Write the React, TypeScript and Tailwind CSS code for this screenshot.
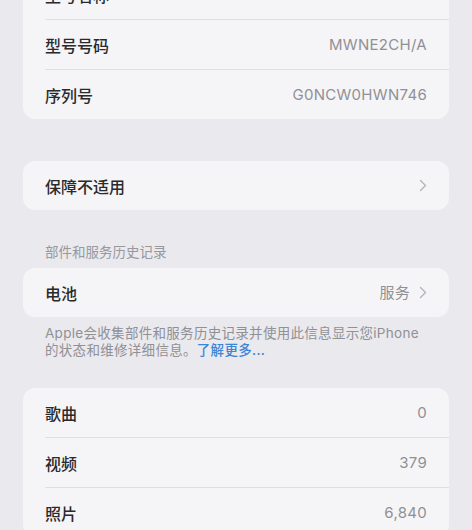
import React from 'react';

const CJK = "font-['Noto_Sans_CJK_SC',sans-serif]";
const LATIN = "font-['Inter','Noto_Sans_CJK_SC',sans-serif]";

function Chevron() {
  return (
    <svg width="8" height="13" viewBox="0 0 8 13" className="ml-[9px]" fill="none">
      <path d="M1.5 1.5 L6.5 6.5 L1.5 11.5" stroke="#b4b4b8" strokeWidth="1.4" strokeLinecap="round" strokeLinejoin="round" />
    </svg>
  );
}

type Row = { label: string; value?: string; chevron?: boolean };

function Card({ rows, className = '' }: { rows: Row[]; className?: string }) {
  return (
    <div className={`mx-[23px] rounded-[12px] bg-[#f5f5f7] ${className}`}>
      {rows.map((r, i) => (
        <div key={r.label}>
          {i > 0 && <div className="ml-[22px] h-px bg-[#dfdfe3]" />}
          <div className="flex h-[49px] items-center justify-between pl-[22px] pr-[22px]">
            <span className={`${CJK} text-[16px] leading-[20px] font-medium text-[#2a2a2d]`}>{r.label}</span>
            <span className="flex items-center">
              {r.value && (
                <span className={`${LATIN} text-[15px] leading-[20px] tracking-[0.3px] text-[#909095]`}>{r.value}</span>
              )}
              {r.chevron && <Chevron />}
            </span>
          </div>
        </div>
      ))}
    </div>
  );
}

export default function App() {
  return (
    <div className="h-[530px] w-[472px] overflow-hidden bg-[#e9e9ee]">
      <div className="-mt-[30px]">
        <Card
          rows={[
            { label: '型号名称', value: 'iPhone 16' },
            { label: '型号号码', value: 'MWNE2CH/A' },
            { label: '序列号', value: 'G0NCW0HWN746' },
          ]}
        />
      </div>

      <Card className="mt-[42px]" rows={[{ label: '保障不适用', chevron: true }]} />

      <div className={`${CJK} mx-[45px] mt-[33px] mb-[8px] text-[13.5px] leading-[17px] text-[#98989d]`}>
        部件和服务历史记录
      </div>

      <Card rows={[{ label: '电池', value: '服务', chevron: true }]} />

      <p className={`${LATIN} ml-[45px] mt-[8px] text-[13.5px] leading-[17px] tracking-[0.3px] text-[#909095]`}>
        Apple会收集部件和服务历史记录并使用此信息显示您iPhone
        <br />
        的状态和维修详细信息。<span className="font-medium text-[#3a86d8]">了解更多...</span>
      </p>

      <Card
        className="mt-[29px]"
        rows={[
          { label: '歌曲', value: '0' },
          { label: '视频', value: '379' },
          { label: '照片', value: '6,840' },
        ]}
      />
    </div>
  );
}
